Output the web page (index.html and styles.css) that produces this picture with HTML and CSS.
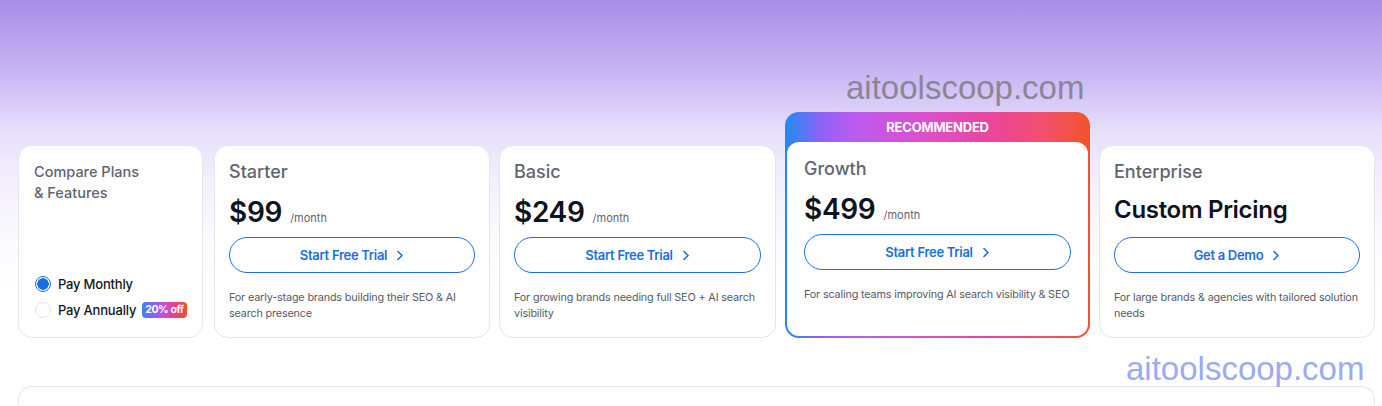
FILE: index.html
```html
<!DOCTYPE html>
<html>
<head>
<meta charset="utf-8">
<link rel="stylesheet" href="styles.css">
</head>
<body>
<div class="page">
  <div class="wm wm-top">aitoolscoop.com</div>
  <div class="plans">
    <div class="card compare">
      <div class="compare-title">Compare Plans<br>&amp; Features</div>
      <div class="billing">
        <div class="opt"><span class="radio on"></span><span>Pay Monthly</span></div>
        <div class="opt"><span class="radio"></span><span>Pay Annually</span><span class="badge">20% off</span></div>
      </div>
    </div>
    <div class="card plan">
      <div class="name">Starter</div>
      <div class="price"><span class="amt">$99</span><span class="per">/month</span></div>
      <a class="btn">Start Free Trial <svg width="8" height="11" viewBox="0 0 8 11"><path d="M2 1.5l4 4-4 4" fill="none" stroke="#1a6fe0" stroke-width="1.6" stroke-linecap="round" stroke-linejoin="round"/></svg></a>
      <p class="desc">For early-stage brands building their SEO &amp; AI search presence</p>
    </div>
    <div class="card plan">
      <div class="name">Basic</div>
      <div class="price"><span class="amt">$249</span><span class="per">/month</span></div>
      <a class="btn">Start Free Trial <svg width="8" height="11" viewBox="0 0 8 11"><path d="M2 1.5l4 4-4 4" fill="none" stroke="#1a6fe0" stroke-width="1.6" stroke-linecap="round" stroke-linejoin="round"/></svg></a>
      <p class="desc">For growing brands needing full SEO + AI search visibility</p>
    </div>
    <div class="rec">
      <div class="rec-label">RECOMMENDED</div>
      <div class="rec-inner plan">
        <div class="name">Growth</div>
        <div class="price"><span class="amt">$499</span><span class="per">/month</span></div>
        <a class="btn">Start Free Trial <svg width="8" height="11" viewBox="0 0 8 11"><path d="M2 1.5l4 4-4 4" fill="none" stroke="#1a6fe0" stroke-width="1.6" stroke-linecap="round" stroke-linejoin="round"/></svg></a>
        <p class="desc nowrap">For scaling teams improving AI search visibility &amp; SEO</p>
      </div>
    </div>
    <div class="card plan">
      <div class="name">Enterprise</div>
      <div class="price"><span class="custom">Custom Pricing</span></div>
      <a class="btn">Get a Demo <svg width="8" height="11" viewBox="0 0 8 11"><path d="M2 1.5l4 4-4 4" fill="none" stroke="#1a6fe0" stroke-width="1.6" stroke-linecap="round" stroke-linejoin="round"/></svg></a>
      <p class="desc">For large brands &amp; agencies with tailored solution needs</p>
    </div>
  </div>
  <div class="wm wm-bottom">aitoolscoop.com</div>
  <div class="table-card"></div>
</div>
</body>
</html>
```
FILE: styles.css
```css
* { box-sizing: border-box; }
html, body { margin: 0; padding: 0; }
body {
  width: 1382px;
  height: 406px;
  overflow: hidden;
  font-family: "Inter", "Liberation Sans", sans-serif;
  background: linear-gradient(to bottom, #a78de7 0px, #b9a3ee 40px, #cbbbf4 80px, #e6dffb 130px, #f3effd 180px, #fbfaff 240px, #ffffff 290px);
}
.page {
  position: relative;
  height: 406px;
  padding: 112px 7px 0 18px;
}
.wm {
  position: absolute;
  font-family: "Liberation Sans", Arial, sans-serif;
  font-size: 33px;
  line-height: 36px;
}
.wm-top { left: 846px; top: 70px; color: #8d8497; }
.wm-bottom { left: 1126px; top: 351px; color: #9aabf2; }
.plans {
  display: flex;
  align-items: flex-end;
  gap: 9px;
}
.card {
  background: #fff;
  border: 1px solid #e6e6ea;
  border-radius: 14px;
  height: 193px;
  flex-shrink: 0;
}
.compare {
  width: 185px;
  margin-right: 2px;
  padding: 15px 15px 0 15px;
  display: flex;
  flex-direction: column;
}
.compare-title {
  font-size: 14.5px;
  line-height: 21px;
  color: #5f6570;
  font-weight: 500;
}
.billing { margin-top: auto; margin-bottom: 14px; }
.opt {
  display: flex;
  align-items: center;
  height: 26px;
  font-size: 13px;
  font-weight: 500;
  color: #15171c;
  letter-spacing: -0.2px;
  white-space: nowrap;
}
.radio {
  width: 16px; height: 16px;
  flex-shrink: 0;
  border-radius: 50%;
  border: 1.5px solid #e4e4e8;
  margin: 0 7px 0 1px;
  background: #fff;
}
.radio.on {
  border: 1.5px solid #1a6fe0;
  background: radial-gradient(circle, #1a6fe0 0 5.5px, #fff 6px);
}
.badge {
  margin-left: 6px;
  font-size: 10.5px;
  font-weight: 700;
  color: #fff;
  padding: 1px 3px;
  border-radius: 4px;
  line-height: 14px;
  letter-spacing: -0.4px;
  background: linear-gradient(90deg, #3b82f6, #c04fe8 45%, #f0407a 75%, #f4502a);
}
.plan { padding: 15px 14px 0 14px; }
.card.plan:nth-child(2) { width: 276px; }
.card.plan:nth-child(3) { width: 277px; }
.card.plan:nth-child(5) { width: 276px; }
.name {
  font-size: 18px;
  line-height: 22px;
  color: #5f6570;
  font-weight: 500;
}
.price {
  display: flex;
  align-items: baseline;
  height: 34px;
  margin-top: 12px;
}
.amt {
  font-size: 28px;
  font-weight: 600;
  color: #0d1320;
  letter-spacing: -0.3px;
}
.per {
  font-size: 11px;
  color: #5f6570;
  margin-left: 8px;
}
.custom {
  font-size: 24px;
  font-weight: 600;
  color: #0d1320;
  letter-spacing: -0.3px;
}
.btn {
  display: flex;
  align-items: center;
  justify-content: center;
  gap: 9px;
  height: 36px;
  margin-top: 8px;
  border: 1px solid #1a6fe0;
  border-radius: 999px;
  color: #1a6fe0;
  font-size: 13px;
  font-weight: 600;
  letter-spacing: -0.3px;
}
.btn svg { margin-top: 1px; }
.desc {
  margin: 17px 0 0 0;
  font-size: 10.8px;
  line-height: 15.5px;
  letter-spacing: -0.15px;
  color: #555b66;
}
.desc.nowrap { white-space: nowrap; }
.rec {
  width: 305px;
  height: 226px;
  flex-shrink: 0;
  border-radius: 14px;
  padding: 0 2px 2px 2px;
  background: linear-gradient(90deg, #1f8bf4 0%, #8e62f6 12%, #b95cf0 22%, #dc4fcf 45%, #ec4595 70%, #f2506b 85%, #f4522c 100%);
  display: flex;
  flex-direction: column;
}
.rec-label {
  height: 30px;
  text-align: center;
  color: #fff;
  font-size: 13px;
  font-weight: 700;
  line-height: 30px;
  letter-spacing: -0.2px;
}
.rec-inner {
  flex: 1;
  background: #fff;
  border-radius: 12px;
  padding: 16px 17px 0 17px;
}
.table-card {
  margin-top: 48px;
  height: 19px;
  background: #fff;
  border: 1px solid #e6e6ea;
  border-bottom: none;
  border-radius: 14px 14px 0 0;
}
```
